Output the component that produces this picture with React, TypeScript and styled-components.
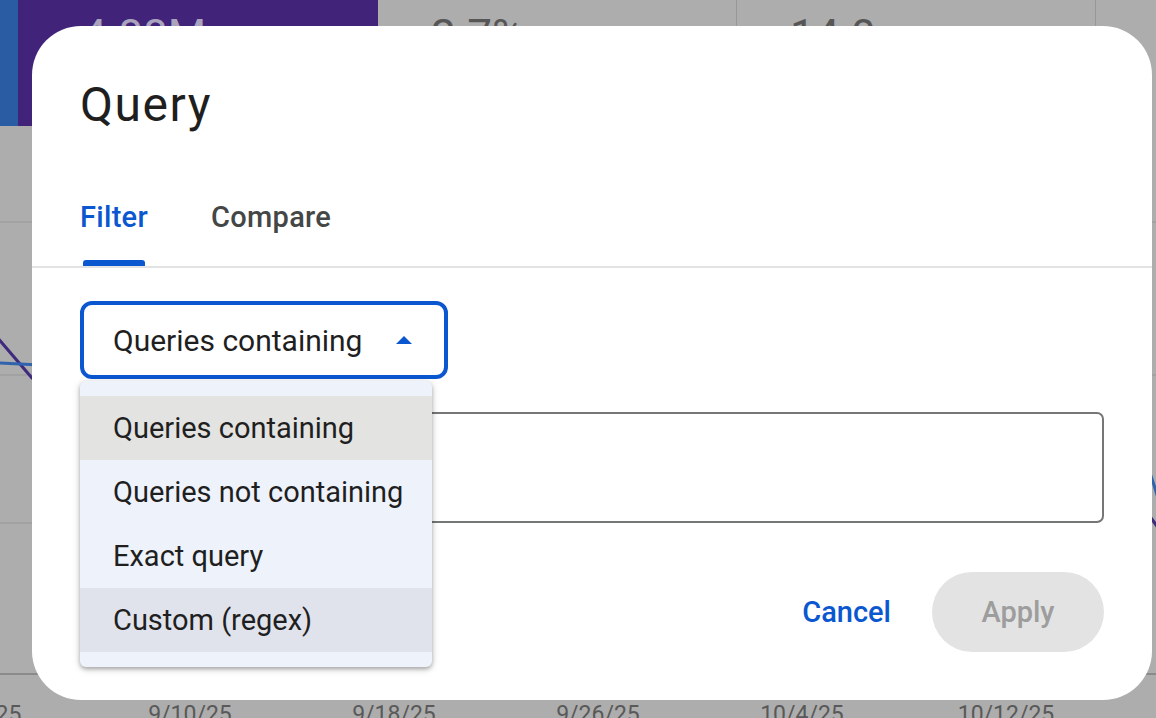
import styled, { createGlobalStyle } from 'styled-components';

const BLUE = '#0b57d0';

const GlobalStyle = createGlobalStyle`
  html, body {
    margin: 0;
    padding: 0;
  }
  body {
    background: #adadad;
    font-family: Roboto, "Liberation Sans", Arial, sans-serif;
    overflow: hidden;
  }
`;

const TILES = [
  { value: '4.88M', bg: '#41247a', ink: '#a9a3bd', width: 360, inset: 64 },
  { value: '2.7%', bg: 'transparent', ink: '#565656', width: 359, inset: 53, divider: true },
  { value: '14.0', bg: 'transparent', ink: '#565656', width: 359, inset: 53, divider: true },
];

const DATES = ['9/2/25', '9/10/25', '9/18/25', '9/26/25', '10/4/25', '10/12/25'];

const OPTIONS: { label: string; tone?: 'selected' | 'hover' }[] = [
  { label: 'Queries containing', tone: 'selected' },
  { label: 'Queries not containing' },
  { label: 'Exact query' },
  { label: 'Custom (regex)', tone: 'hover' },
];

const Backdrop = () => (
  <Page>
    <TileRow>
      <Stripe />
      {TILES.map((t) => (
        <Tile key={t.value} $bg={t.bg} $ink={t.ink} $width={t.width} $inset={t.inset} $divider={t.divider}>
          {t.value}
        </Tile>
      ))}
    </TileRow>
    <Chart>
      <svg width="1156" height="576" viewBox="0 0 1156 576">
        <g stroke="#a2a2a2" strokeWidth="2">
          <line x1="0" y1="96" x2="1156" y2="96" />
          <line x1="0" y1="249" x2="1156" y2="249" />
          <line x1="0" y1="397" x2="1156" y2="397" />
        </g>
        <line x1="0" y1="548" x2="1156" y2="548" stroke="#8a8a8a" strokeWidth="2" />
        <polyline points="-4,210 32,252 80,280" fill="none" stroke="#3f2a7e" strokeWidth="3" />
        <polyline points="0,237 40,239 80,240" fill="none" stroke="#2f63ad" strokeWidth="3" />
        <path d="M1120 300 Q1145 320 1160 380" fill="none" stroke="#2f63ad" strokeWidth="3" />
        <path d="M1130 370 Q1148 385 1160 405" fill="none" stroke="#3f2a7e" strokeWidth="3" />
      </svg>
    </Chart>
    <AxisRow>
      {DATES.map((d) => (
        <AxisLabel key={d}>{d}</AxisLabel>
      ))}
    </AxisRow>
  </Page>
);

const QueryDialog = () => (
  <Dialog role="dialog">
    <Title>Query</Title>
    <TabBar>
      <Tab $active>Filter</Tab>
      <Tab>Compare</Tab>
    </TabBar>
    <Body>
      <SelectWrap>
        <SelectBox>
          <span>Queries containing</span>
          <svg width="16" height="8" viewBox="0 0 16 8">
            <path d="M0 8 L8 0 L16 8 Z" fill={BLUE} />
          </svg>
        </SelectBox>
        <Menu>
          {OPTIONS.map((o) => (
            <MenuItem key={o.label} $tone={o.tone}>
              {o.label}
            </MenuItem>
          ))}
        </Menu>
      </SelectWrap>
      <Field />
      <Actions>
        <TextButton>Cancel</TextButton>
        <FilledButton disabled>Apply</FilledButton>
      </Actions>
    </Body>
  </Dialog>
);

const App = () => (
  <>
    <GlobalStyle />
    <Backdrop />
    <QueryDialog />
  </>
);

const Page = styled.div`
  width: 1156px;
  height: 718px;
  display: flex;
  flex-direction: column;
  overflow: hidden;
`;

const TileRow = styled.div`
  display: flex;
  height: 126px;
  flex: none;
`;

const Stripe = styled.div`
  width: 18px;
  background: #2a5ca4;
`;

const Tile = styled.div<{ $bg: string; $ink: string; $width: number; $inset: number; $divider?: boolean }>`
  width: ${({ $width }) => $width}px;
  flex: none;
  box-sizing: border-box;
  padding: 14px 0 0 ${({ $inset }) => $inset}px;
  background: ${({ $bg }) => $bg};
  color: ${({ $ink }) => $ink};
  border-right: ${({ $divider }) => ($divider ? '1px solid #989898' : 'none')};
  font-size: 44px;
  line-height: 1;
`;

const Chart = styled.div`
  height: 575px;
  flex: none;
  svg {
    display: block;
  }
`;

const AxisRow = styled.div`
  display: flex;
  margin-left: -116px;
  height: 28px;
`;

const AxisLabel = styled.div`
  width: 204px;
  flex: none;
  text-align: center;
  font-size: 23px;
  line-height: 28px;
  color: #595959;
`;

const Dialog = styled.div`
  position: fixed;
  top: 26px;
  left: 32px;
  width: 1120px;
  background: #fff;
  border-radius: 49px;
  display: flex;
  flex-direction: column;
`;

const Title = styled.h2`
  margin: 51px 48px 0;
  font-size: 48px;
  line-height: 56px;
  font-weight: 400;
  letter-spacing: 1.5px;
  color: #1f1f1f;
`;

const TabBar = styled.div`
  display: flex;
  gap: 63px;
  margin-top: 66px;
  padding: 0 48px;
  border-bottom: 2px solid #e3e3e3;
`;

const Tab = styled.div<{ $active?: boolean }>`
  display: flex;
  flex-direction: column;
  align-items: center;
  font-size: 29px;
  line-height: 36px;
  font-weight: 500;
  letter-spacing: 0.3px;
  color: ${({ $active }) => ($active ? BLUE : '#444746')};
  &::after {
    content: '';
    margin-top: 25px;
    width: calc(100% - 6px);
    height: 6px;
    border-radius: 3px 3px 0 0;
    background: ${({ $active }) => ($active ? BLUE : 'transparent')};
  }
`;

const Body = styled.div`
  display: flex;
  flex-direction: column;
  padding: 33px 48px 48px;
`;

const SelectWrap = styled.div`
  position: relative;
  width: 368px;
`;

const SelectBox = styled.div`
  box-sizing: border-box;
  height: 78px;
  display: flex;
  align-items: center;
  justify-content: space-between;
  padding: 0 32px 0 29px;
  border: 4px solid ${BLUE};
  border-radius: 12px;
  font-size: 30px;
  color: #1f1f1f;
`;

const Menu = styled.ul`
  position: absolute;
  top: 80px;
  left: 0;
  z-index: 2;
  width: 352px;
  margin: 0;
  padding: 15px 0;
  list-style: none;
  background: #eef2fa;
  border-radius: 6px;
  box-shadow: 0 2px 4px rgba(0, 0, 0, 0.3), 0 2px 10px rgba(0, 0, 0, 0.12);
`;

const MenuItem = styled.li<{ $tone?: 'selected' | 'hover' }>`
  height: 64px;
  display: flex;
  align-items: center;
  padding-left: 33px;
  font-size: 29px;
  color: #1f1f1f;
  background: ${({ $tone }) => ($tone === 'selected' ? '#e3e3e1' : $tone === 'hover' ? '#e0e3eb' : 'transparent')};
`;

const Field = styled.div`
  box-sizing: border-box;
  height: 111px;
  margin-top: 33px;
  border: 2px solid #747775;
  border-radius: 7px;
`;

const Actions = styled.div`
  display: flex;
  justify-content: flex-end;
  align-items: center;
  gap: 17px;
  margin-top: 49px;
`;

const TextButton = styled.button`
  height: 80px;
  padding: 0 24px;
  border: none;
  background: none;
  font-family: inherit;
  font-size: 29px;
  font-weight: 500;
  color: ${BLUE};
`;

const FilledButton = styled.button`
  width: 172px;
  height: 80px;
  border: none;
  border-radius: 40px;
  background: #e3e3e3;
  font-family: inherit;
  font-size: 29px;
  font-weight: 500;
  color: #9d9d9d;
`;

export default App;
